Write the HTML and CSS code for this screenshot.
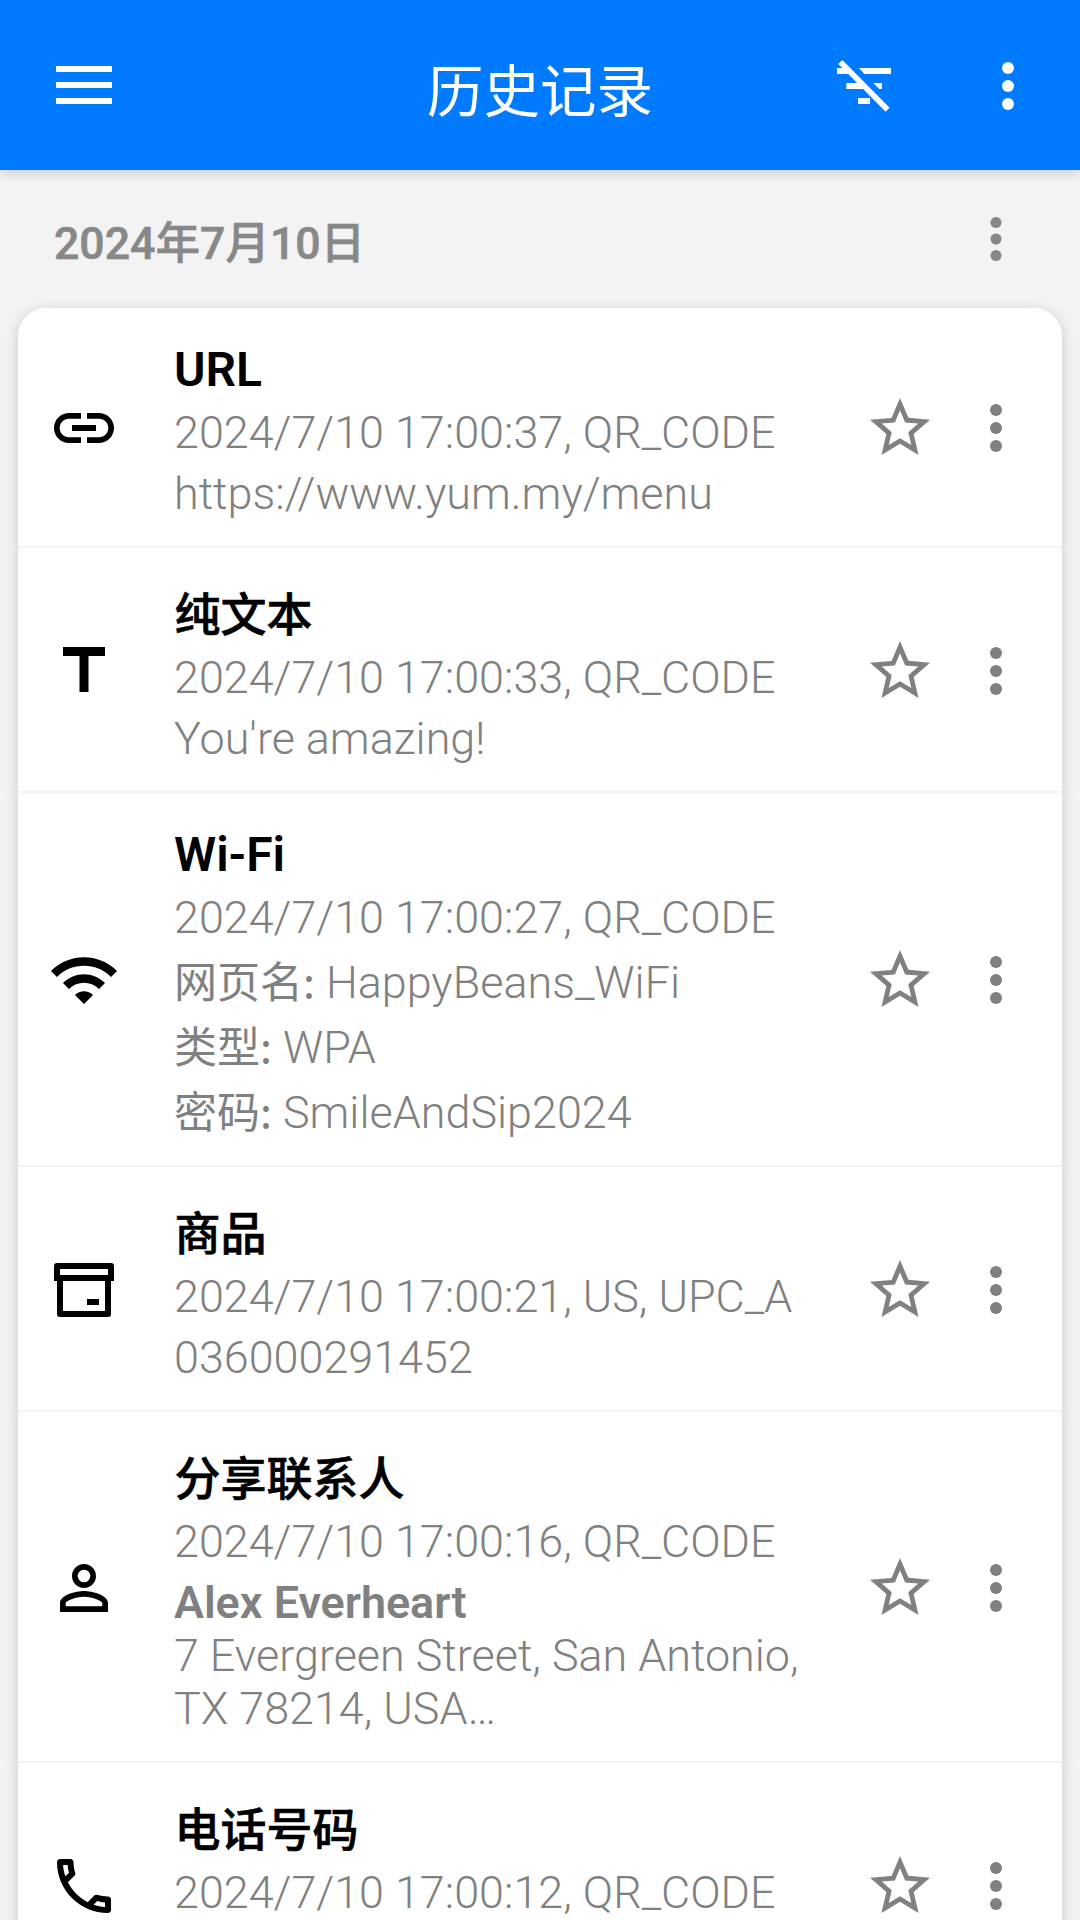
FILE: index.html
```html
<!DOCTYPE html>
<html lang="zh-CN">
<head>
<meta charset="utf-8">
<title>历史记录</title>
<link rel="stylesheet" href="styles.css">
</head>
<body>
<svg class="defs" aria-hidden="true">
  <symbol id="star" viewBox="0 0 24 24"><path d="M22 9.24l-7.19-.62L12 2 9.19 8.63 2 9.24l5.46 4.73L5.82 21 12 17.27 18.18 21l-1.63-7.03L22 9.24zM12 15.4l-3.76 2.27 1-4.28-3.32-2.88 4.38-.38L12 6.1l1.71 4.04 4.38.38-3.32 2.88 1 4.28L12 15.4z"/></symbol>
  <symbol id="more" viewBox="0 0 24 24"><circle cx="12" cy="6" r="2"/><circle cx="12" cy="12" r="2"/><circle cx="12" cy="18" r="2"/></symbol>
</svg>

<header class="bar">
  <svg class="bar-menu" viewBox="0 0 56 38"><path d="M0 0h56v6H0zM0 16h56v6H0zM0 32h56v6H0z"/></svg>
  <h1 class="bar-title">历史记录</h1>
  <div class="bar-actions">
    <svg class="icon" viewBox="0 0 24 24"><path d="M3 6h3.1l2 2H3zM10.33 6H21v2h-8.9zM6.1 11h5l2 2h-7zM15.1 11H18v2h-.9zM10 16h4v2h-4z"/><path d="M3.44 4.67l1.34-1.34 15.77 15.89-1.33 1.33z"/></svg>
    <svg class="icon"><use href="#more"/></svg>
  </div>
</header>

<main>
  <div class="day">
    <h2 class="day-title">2024年7月10日</h2>
    <svg class="icon day-more"><use href="#more"/></svg>
  </div>

  <ul class="list">
    <li class="row">
      <svg class="icon kind" viewBox="0 0 24 24"><path d="M3.9 12c0-1.71 1.39-3.1 3.1-3.1h4V7H7c-2.76 0-5 2.24-5 5s2.24 5 5 5h4v-1.9H7c-1.71 0-3.1-1.39-3.1-3.1zM8 13h8v-2H8v2zm9-6h-4v1.9h4c1.71 0 3.1 1.39 3.1 3.1s-1.39 3.1-3.1 3.1h-4V17h4c2.76 0 5-2.24 5-5s-2.24-5-5-5z"/></svg>
      <div class="text">
        <h3 class="name">URL</h3>
        <p class="meta">2024/7/10 17:00:37, QR_CODE</p>
        <div class="detail"><p>https://www.yum.my/menu</p></div>
      </div>
      <svg class="icon tool"><use href="#star"/></svg>
      <svg class="icon tool"><use href="#more"/></svg>
    </li>
    <li class="row">
      <svg class="icon kind" viewBox="0 0 24 24"><path d="M5 4v3h5.5v12h3V7H19V4z"/></svg>
      <div class="text">
        <h3 class="name name-zh">纯文本</h3>
        <p class="meta">2024/7/10 17:00:33, QR_CODE</p>
        <div class="detail"><p>You're amazing!</p></div>
      </div>
      <svg class="icon tool"><use href="#star"/></svg>
      <svg class="icon tool"><use href="#more"/></svg>
    </li>
    <li class="row">
      <svg class="icon kind" viewBox="0 0 24 24"><path d="M1 9l2 2c4.97-4.97 13.03-4.97 18 0l2-2C16.93 2.93 7.08 2.93 1 9zm8 8l3 3 3-3c-1.65-1.66-4.34-1.66-6 0zm-4-4l2 2c2.76-2.76 7.24-2.76 10 0l2-2C15.14 9.14 8.87 9.14 5 13z"/></svg>
      <div class="text">
        <h3 class="name">Wi-Fi</h3>
        <p class="meta">2024/7/10 17:00:27, QR_CODE</p>
        <div class="detail detail-fields">
          <p><span class="label">网页名:</span> HappyBeans_WiFi</p>
          <p><span class="label">类型:</span> WPA</p>
          <p><span class="label">密码:</span> SmileAndSip2024</p>
        </div>
      </div>
      <svg class="icon tool"><use href="#star"/></svg>
      <svg class="icon tool"><use href="#more"/></svg>
    </li>
    <li class="row">
      <svg class="icon kind" viewBox="0 0 24 24"><path fill-rule="evenodd" d="M3 3h18a1 1 0 0 1 1 1v5h-1v11a1 1 0 0 1-1 1H4a1 1 0 0 1-1-1V9H2V4a1 1 0 0 1 1-1zM4 5v2h16V5zM5 9v10h14V9zM13 15h4v2h-4z"/></svg>
      <div class="text">
        <h3 class="name name-zh">商品</h3>
        <p class="meta">2024/7/10 17:00:21, US, UPC_A</p>
        <div class="detail"><p>036000291452</p></div>
      </div>
      <svg class="icon tool"><use href="#star"/></svg>
      <svg class="icon tool"><use href="#more"/></svg>
    </li>
    <li class="row">
      <svg class="icon kind" viewBox="0 0 24 24"><path d="M12 5.9a2.1 2.1 0 1 1 0 4.2 2.1 2.1 0 0 1 0-4.2m0 9c2.97 0 6.1 1.46 6.1 2.1v1.1H5.9V17c0-.64 3.13-2.1 6.1-2.1M12 4C9.79 4 8 5.79 8 8s1.79 4 4 4 4-1.79 4-4-1.79-4-4-4zm0 9c-2.67 0-8 1.34-8 4v3h16v-3c0-2.66-5.33-4-8-4z"/></svg>
      <div class="text">
        <h3 class="name name-zh">分享联系人</h3>
        <p class="meta">2024/7/10 17:00:16, QR_CODE</p>
        <div class="detail">
          <p class="person">Alex Everheart</p>
          <p>7 Evergreen Street, San Antonio,<br>TX 78214, USA…</p>
        </div>
      </div>
      <svg class="icon tool"><use href="#star"/></svg>
      <svg class="icon tool"><use href="#more"/></svg>
    </li>
    <li class="row">
      <svg class="icon kind" viewBox="0 0 24 24"><path d="M6.54 5c.06.89.21 1.76.45 2.59l-1.2 1.2c-.41-1.2-.67-2.47-.76-3.79h1.51m9.86 12.02c.85.24 1.72.39 2.6.45v1.49c-1.32-.09-2.59-.35-3.8-.75l1.2-1.19M7.5 3H4c-.55 0-1 .45-1 1 0 9.39 7.61 17 17 17 .55 0 1-.45 1-1v-3.49c0-.55-.45-1-1-1-1.24 0-2.45-.2-3.57-.57-.1-.04-.21-.05-.31-.05-.26 0-.51.1-.71.29l-2.2 2.2c-2.83-1.45-5.15-3.76-6.59-6.59l2.2-2.2c.28-.28.36-.67.25-1.02C8.7 6.45 8.5 5.25 8.5 4c0-.55-.45-1-1-1z"/></svg>
      <div class="text">
        <h3 class="name name-zh">电话号码</h3>
        <p class="meta">2024/7/10 17:00:12, QR_CODE</p>
        <div class="detail"><p>&nbsp;</p></div>
      </div>
      <svg class="icon tool"><use href="#star"/></svg>
      <svg class="icon tool"><use href="#more"/></svg>
    </li>
  </ul>
</main>
</body>
</html>
```
FILE: styles.css
```css
* { box-sizing: border-box; margin: 0; padding: 0; }

body {
  width: 1080px;
  height: 1920px;
  overflow: hidden;
  background: #f3f3f3;
  color: #808080;
  font-family: Roboto, "Noto Sans CJK SC", sans-serif;
}

.defs { display: none; }

.icon {
  display: block;
  flex: none;
  width: 72px;
  height: 72px;
  fill: currentColor;
}

/* App bar */
.bar {
  position: relative;
  display: grid;
  grid-template-columns: 1fr auto 1fr;
  align-items: center;
  height: 170px;
  padding: 0 36px 0 56px;
  background: #007aff;
  color: #fff;
  box-shadow: 0 2px 14px rgba(0, 0, 0, .18);
}
.bar-menu { width: 56px; height: 38px; fill: currentColor; }
.bar-title {
  margin-right: 20px;
  padding-top: 16px;
  font-size: 56.5px;
  font-weight: 400;
  line-height: 80px;
}
.bar-actions {
  display: flex;
  justify-content: flex-end;
  gap: 72px;
  padding-top: 2px;
}

/* Day heading */
.day {
  display: flex;
  align-items: center;
  justify-content: space-between;
  height: 138px;
  padding: 0 51px 0 54px;
}
.day-title {
  padding-top: 9px;
  color: #888;
  font-size: 44.6px;
  font-weight: 500;
  line-height: 60px;
  -webkit-text-stroke: .6px currentColor;
}
.day-more { width: 66px; height: 66px; color: #868686; }

/* History list */
.list {
  isolation: isolate;
  margin: 0 18px;
  list-style: none;
}
.row {
  position: relative;
  display: flex;
  align-items: center;
  padding: 0 30px;
  border-bottom: 2px solid #f3f3f3;
  background: #fff;
}
.row::before {
  content: "";
  position: absolute;
  inset: 0;
  z-index: -1;
  border-radius: inherit;
  box-shadow: 0 3px 14px rgba(0, 0, 0, .18);
}
.row:first-child { border-radius: 28px 28px 0 0; }
.row > .icon { margin-top: 2px; }
.kind { color: #000; }
.text {
  flex: 1;
  padding: 32px 0 26px 54px;
  white-space: nowrap;
}
.name {
  margin-bottom: 2px;
  color: #000;
  font-size: 48px;
  font-weight: 600;
  line-height: 60px;
}
.name-zh {
  padding-top: 5px;
  font-size: 46px;
  font-weight: 500;
  text-indent: .5px;
  -webkit-text-stroke: .6px currentColor;
}
.meta, .detail { font-size: 44.9px; font-weight: 300; }
.meta { line-height: 61px; }
.detail { margin-top: 4px; line-height: 53px; }
.detail-fields { margin: 2px 0 -6px; line-height: 65px; }
.label { font-family: "Noto Sans CJK SC", sans-serif; font-size: 43px; font-weight: 400; line-height: 1; }
.person { font-weight: 600; }
.tool + .tool { margin-left: 24px; }
```
